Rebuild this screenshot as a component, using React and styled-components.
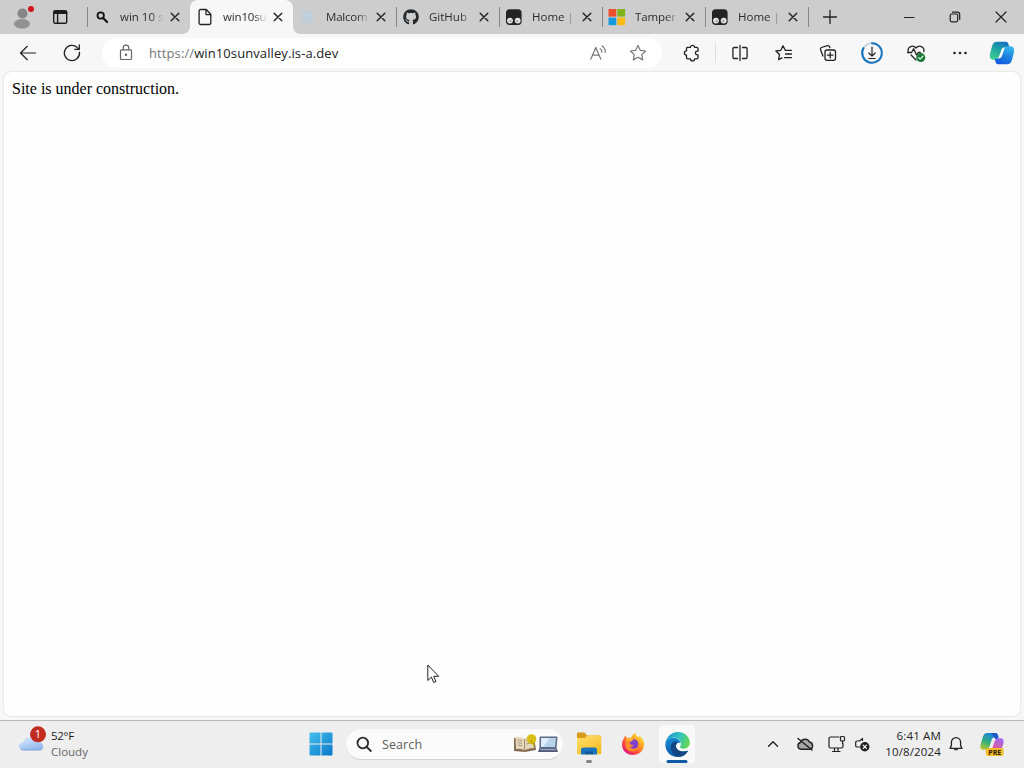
import React from 'react';
import styled, { createGlobalStyle, css } from 'styled-components';
import { FaGithub } from 'react-icons/fa';

const GlobalStyle = createGlobalStyle`
  * {
    box-sizing: border-box;
  }
  body {
    margin: 0;
    overflow: hidden;
    font-family: 'Open Sans', 'Noto Sans', sans-serif;
    color: #1b1b1b;
  }
  svg {
    display: block;
    flex: none;
    overflow: visible;
  }
`;

const Desktop = styled.div`
  position: relative;
  display: flex;
  flex-direction: column;
  width: 1024px;
  height: 768px;
  background: #f7f7f7;
`;

const TabStrip = styled.div`
  display: flex;
  height: 34px;
  background: #cdcdcd;
`;

const StripTools = styled.div`
  display: flex;
  align-items: center;
  width: 87px;
  padding-left: 12px;
  gap: 20px;
`;

const activeTab = css`
  background: #f7f7f7;
  border-radius: 8px 8px 0 0;
  &::before,
  &::after {
    content: '';
    position: absolute;
    bottom: 0;
    width: 7px;
    height: 7px;
  }
  &::before {
    left: -7px;
    background: radial-gradient(circle at 0 0, transparent 6.5px, #f7f7f7 7px);
  }
  &::after {
    right: -7px;
    background: radial-gradient(circle at 100% 0, transparent 6.5px, #f7f7f7 7px);
  }
`;

const TabBox = styled.div`
  position: relative;
  display: flex;
  align-items: center;
  width: 103px;
  padding-left: 7px;
  ${props => props.$active && activeTab}
`;

const TabLine = styled.span`
  width: 1px;
  height: 20px;
  margin-right: -1px;
  align-self: center;
  background: ${props => (props.$hidden ? 'transparent' : '#858585')};
`;

const TabLabel = styled.span`
  width: 43px;
  margin: 0 5px 0 10px;
  overflow: hidden;
  white-space: nowrap;
  font-size: 11.5px;
  line-height: 18px;
  letter-spacing: ${props => props.$spacing || 0}px;
  color: #2c2c2c;
  mask-image: linear-gradient(to right, #000 72%, rgba(0, 0, 0, 0.12) 98%);
`;

const StripButton = styled.div`
  display: flex;
  align-items: center;
  justify-content: center;
  width: ${props => props.$width || 46}px;
`;

const WindowButtons = styled.div`
  display: flex;
  margin-left: auto;
`;

const Toolbar = styled.div`
  display: flex;
  align-items: center;
  height: 38px;
  padding: 0 0 0 6px;
  background: #f7f7f7;
`;

const ToolButton = styled.div`
  display: flex;
  align-items: center;
  justify-content: center;
  width: ${props => props.$width || 44}px;
  height: 32px;
`;

const AddressBar = styled.div`
  display: flex;
  align-items: center;
  width: 560px;
  height: 30px;
  margin: 0 8px;
  padding: 0 4px 0 16px;
  border-radius: 15px;
  background: #fff;
`;

const Url = styled.span`
  flex: 1;
  margin-left: 15px;
  font-size: 13px;
  line-height: 20px;
  letter-spacing: 0.1px;
  white-space: nowrap;
  color: #222;
`;

const Protocol = styled.span`
  color: #777;
`;

const ToolDivider = styled.span`
  width: 1px;
  height: 20px;
  margin: 0 2px 0 1px;
  background: #dcdcdc;
`;

const Page = styled.main`
  flex: 1;
  margin: 0 4px 4px;
  padding: 8px;
  border-radius: 7px;
  background: #fefefe;
  box-shadow: 0 0 2px #c4c4c4;
  font-family: 'Liberation Serif', serif;
  font-size: 16px;
  line-height: 18px;
  color: #000;
`;

const PageText = styled.p`
  margin: 0;
`;

const Taskbar = styled.footer`
  display: flex;
  align-items: center;
  height: 48px;
  padding-bottom: 1px;
  border-top: 1px solid #b9b9b9;
  background: #eee;
`;

const Weather = styled.div`
  display: flex;
  align-items: center;
  width: 299px;
  padding-left: 18px;
  gap: 4px;
`;

const WeatherText = styled.div`
  font-size: 11.5px;
  line-height: 16px;
  letter-spacing: -0.3px;
  color: #1b1b1b;
`;

const Muted = styled.div`
  color: #666;
  letter-spacing: 0;
`;

const SearchBox = styled.div`
  display: flex;
  align-items: center;
  width: 217px;
  height: 31px;
  margin: 1px 4px 0;
  padding: 0 4px 0 10px;
  border-radius: 16px;
  background: #fbfbfb;
  border-bottom: 1px solid #d2d2d2;
`;

const SearchLabel = styled.span`
  flex: 1;
  margin-left: 10px;
  font-size: 12.5px;
  letter-spacing: 0.1px;
  color: #5c5c5c;
`;

const TaskButton = styled.div`
  position: relative;
  display: flex;
  align-items: center;
  justify-content: center;
  width: ${props => (props.$narrow ? 43 : 44)}px;
  height: 40px;
`;

const ActiveApp = styled.div`
  display: flex;
  align-items: center;
  justify-content: center;
  width: 36px;
  height: 38px;
  border-radius: 4px;
  background: #f9f9f9;
`;

const Indicator = styled.span`
  position: absolute;
  bottom: 1px;
  left: 50%;
  width: ${props => (props.$active ? 21 : 6)}px;
  height: 3px;
  border-radius: 2px;
  transform: translateX(-50%);
  background: ${props => (props.$active ? '#0f5aa5' : '#858585')};
`;

const Tray = styled.div`
  display: flex;
  align-items: center;
  margin: 0 9px 0 auto;
`;

const TrayItem = styled.div`
  display: flex;
  align-items: center;
  justify-content: center;
  width: ${props => props.$width}px;
  height: 40px;
`;

const Clock = styled.div`
  width: 68px;
  font-size: 11.5px;
  line-height: 16px;
  text-align: right;
  white-space: nowrap;
  color: #222;
`;

const ClockLine = styled.div`
  letter-spacing: 0.15px;
`;

const Pointer = styled.div`
  position: absolute;
  left: 427px;
  top: 664px;
`;

// Base for all outline icons, one unit is one pixel
function Line({ w = 20, h = w, color = '#222', stroke = 1.2, children }) {
  return (
    <svg
      width={w}
      height={h}
      viewBox={`0 0 ${w} ${h}`}
      fill="none"
      stroke={color}
      strokeWidth={stroke}
      strokeLinecap="round"
      strokeLinejoin="round"
    >
      {children}
    </svg>
  );
}

const CloseIcon = ({ size = 14, inset = 3.2, stroke = 1.4 }) => (
  <Line w={size} stroke={stroke}>
    <path d={`M${inset} ${inset} L${size - inset} ${size - inset} M${size - inset} ${inset} L${inset} ${size - inset}`} />
  </Line>
);

const ProfileIcon = () => (
  <svg width="20" height="24" viewBox="0 0 20 24">
    <circle cx="10.5" cy="8.5" r="5" fill="#858585" />
    <ellipse cx="10" cy="18.8" rx="8" ry="4.8" fill="#929292" />
    <circle cx="19" cy="4" r="3" fill="#d3141c" />
  </svg>
);

const WorkspaceIcon = () => (
  <Line w={16} stroke={1.4} color="#1c1c1c">
    <rect x="1.7" y="1.7" width="13" height="12.6" rx="1.6" />
    <path d="M2.5 3.4h11.4" strokeWidth="3" />
    <path d="M5.6 5v9" />
  </Line>
);

const MagnifierFavicon = () => (
  <Line w={16} stroke={1.8} color="#111">
    <circle cx="6.7" cy="6.5" r="3.2" />
    <path d="M9.3 9.2l3.8 3.8" strokeWidth="2.2" />
  </Line>
);

const DocumentFavicon = () => (
  <Line w={16} stroke={1.3}>
    <path d="M3.6 .5h5.6l4.6 4.8v8.7a1.5 1.5 0 0 1-1.5 1.5H3.6a1.5 1.5 0 0 1-1.5-1.5v-12A1.5 1.5 0 0 1 3.6.5z" />
    <path d="M9 .7v4.9h4.6" />
  </Line>
);

const PaleFavicon = () => (
  <svg width="16" height="16" viewBox="0 0 16 16">
    <rect x="1.5" y="1" width="12" height="14" rx="4" fill="#c4cdd6" />
    <path d="M4.5 5q3-2 6 0v5.5q-3 2-6 0z" fill="#c0d0df" />
  </svg>
);

const TampermonkeyFavicon = () => (
  <svg width="16" height="16" viewBox="0 0 16 16">
    <rect x="0" y="0.3" width="15.6" height="15.6" rx="3.6" fill="#242424" />
    <circle cx="4" cy="11.6" r="2.9" fill="#e4e4e4" />
    <circle cx="11.7" cy="11.6" r="2.9" fill="#e4e4e4" />
    <circle cx="4.6" cy="12" r="1.1" fill="#999" />
    <circle cx="11.2" cy="12" r="1.1" fill="#999" />
  </svg>
);

const MicrosoftFavicon = () => (
  <svg width="16" height="16" viewBox="0 0 16 16">
    <path fill="#ed4e2c" d="M-.5 0h7.8v7.6H-.5z" />
    <path fill="#7eb51d" d="M8.3 0h7.8v7.6H8.3z" />
    <path fill="#1799df" d="M-.5 8.6h7.8v7.6H-.5z" />
    <path fill="#fcb916" d="M8.3 8.6h7.8v7.6H8.3z" />
  </svg>
);

const BackIcon = () => (
  <Line>
    <path d="M17.5 10H2.5M9.3 3.3L2.5 10l6.8 6.7" />
  </Line>
);

const ReloadIcon = () => (
  <Line stroke={1.3}>
    <path d="M17.5 9.2A7.6 7.6 0 1 1 15.3 4.6L17 6.2M17.3 2v4.4h-4.5" />
  </Line>
);

const LockIcon = () => (
  <Line w={16} h={18} color="#666">
    <rect x="2.5" y="5.8" width="11" height="9.7" rx="1" />
    <path d="M5.2 5.6V4a2.8 2.8 0 0 1 5.6 0v1.6" />
    <circle cx="8" cy="10.8" r="0.6" fill="#555" />
  </Line>
);

const ReadAloudIcon = () => (
  <Line w={18} color="#777">
    <path d="M1.8 15.2L6.8 3.4l5 11.8M3.6 11.2h6.5M11.2 4.6q1.8 1.4 1.6 3.6M13.2 2q3.4 2.4 3 6.4" />
  </Line>
);

const StarIcon = () => (
  <Line w={18} color="#777">
    <path d="M9 1.5l2.3 4.8 5.3.7-3.9 3.6 1 5.3L9 13.3l-4.7 2.6 1-5.3L1.4 7l5.3-.7z" />
  </Line>
);

const PuzzleIcon = () => (
  <Line w={18} stroke={1.3}>
    <path d="M4.5 3.3H7.5a2 2 0 0 1 4 0h2.2a1.3 1.3 0 0 1 1.3 1.3v2.6h-.8a1.8 1.8 0 0 0 0 3.6h.8v2.8a1.3 1.3 0 0 1-1.3 1.3h-2.2a2 2 0 0 1-4 0H4.8a1.3 1.3 0 0 1-1.3-1.3v-2.5a2.1 2.1 0 0 1 0-4.2V4.5a1.2 1.2 0 0 1 1-1.2z" />
  </Line>
);

const SplitIcon = () => (
  <Line w={18} stroke={1.3}>
    <path d="M6.5 3.5H3.1A1.2 1.2 0 0 0 1.9 4.7v8.6a1.2 1.2 0 0 0 1.2 1.2H6.5M11.5 3.5h3.4a1.2 1.2 0 0 1 1.2 1.2v8.6a1.2 1.2 0 0 1-1.2 1.2H11.5M9 1.5v15" />
  </Line>
);

const FavoritesIcon = () => (
  <Line w={18} stroke={1.3}>
    <path d="M10.3 6.3L8 1.8 5.8 6.3l-4.9.7 3.6 3.5-.9 5.1 3.4-1.7M10.3 6.3h6.2M10.5 10h6M9.5 13.6h7" />
  </Line>
);

const CollectionsIcon = () => (
  <Line w={18} stroke={1.3}>
    <rect x="6" y="6" width="10.5" height="10.3" rx="2" />
    <path d="M11.2 8.3v5.6M8.4 11.1H14M3.9 12L1.5 5.5a1.6 1.6 0 0 1 1-2l6-1.8a1.6 1.6 0 0 1 2 1l.4 1" />
  </Line>
);

const DownloadIcon = () => (
  <Line w={22} stroke={1.2}>
    <circle cx="11" cy="11" r="9.8" stroke="#c7d5df" strokeWidth="1.8" />
    <path d="M11 1.2A9.8 9.8 0 1 1 2.5 6.1" stroke="#1675bd" strokeWidth="2" />
    <path d="M11 5v9M7.8 11L11 14.2l3.2-3.2M7.8 16.5h6.4" />
  </Line>
);

const HealthIcon = () => (
  <Line w={20} stroke={1.3}>
    <path d="M2.2 8.5C1.2 3.5 7 1.5 10 5c3-3.5 8.8-1.5 7.8 3.5M5 12l5 5M1.6 9.5h4l2-3.7 3 6.2 1.7-2.5h2" />
    <circle cx="14.8" cy="14.6" r="4.5" fill="#177b36" stroke="none" />
    <path d="M12.8 14.7l1.4 1.4 2.7-2.8" stroke="#d9efdf" />
  </Line>
);

const MoreIcon = () => (
  <svg width="18" height="18" viewBox="0 0 18 18" fill="#222">
    <circle cx="3.5" cy="9" r="1.3" />
    <circle cx="9" cy="9" r="1.3" />
    <circle cx="14.5" cy="9" r="1.3" />
  </svg>
);

const CopilotIcon = () => (
  <svg width="24" height="24" viewBox="0 0 24 24">
    <defs>
      <linearGradient id="copLeft" x1="0.7" y1="0" x2="0.2" y2="1">
        <stop offset="0" stopColor="#1670c4" />
        <stop offset="0.4" stopColor="#1d9fa5" />
        <stop offset="1" stopColor="#3fcf8c" />
      </linearGradient>
      <linearGradient id="copRight" x1="0.7" y1="0" x2="0.3" y2="1">
        <stop offset="0" stopColor="#38b8ee" />
        <stop offset="0.5" stopColor="#1c84e0" />
        <stop offset="1" stopColor="#1658dc" />
      </linearGradient>
    </defs>
    <path fill="url(#copLeft)" d="M7 .8h8.500c2.300 0 3 1.700 3.800 5.200l-3 .5c-2.600 0-3.800 1-4.500 3.300L10 15.500c-.8 2.300-2 3.300-4 3.300H3.500C.5 18.800-.8 16 .1 12.500l2-7.500C3 2 4.500.8 7 .8z" />
    <path fill="url(#copRight)" d="M17 23.200H8.500c-2.300 0-3-1.700-3.800-5.200l3-.5c2.600 0 3.800-1 4.500-3.300L14 8.500c.8-2.300 2-3.300 4-3.300h2.500c3 0 4.300 2.800 3.400 6.300l-2 7.500c-.9 3-2.400 4.200-4.900 4.200z" />
    <path fill="#f4f9fc" d="M11.500 8.500q1-2.300 3.800-2.300-1 .8-1.500 2.300l-2.200 6.500q-.7 2-2.500 2.300H7.500q1.300-1 1.900-2.700z" />
  </svg>
);

const WeatherIcon = () => (
  <svg width="29" height="28" viewBox="0 0 29 28">
    <defs>
      <linearGradient id="cloud" x1="0" y1="0" x2="0.6" y2="1">
        <stop offset="0" stopColor="#dceafb" />
        <stop offset="1" stopColor="#92b8ee" />
      </linearGradient>
    </defs>
    <g transform="translate(0 -3)">
      <path fill="url(#cloud)" d="M5.5 23C-.5 23-.3 15.500 5 15.500c1-4.500 7-7 10.500-3 2-.5 3.800.5 4.200 2.500 6.500-.5 7.800 8 1.300 8z" />
      <path d="M2.5 21.800q1.300 1.200 3 1.200H21q2 0 3.300-1.300" fill="none" stroke="#7b9fdc" />
      <circle cx="20" cy="7.300" r="8" fill="#c42b20" />
      <text x="20" y="11.300" textAnchor="middle" fontSize="11" fill="#fff">1</text>
    </g>
  </svg>
);

const StartIcon = () => (
  <svg width="24" height="24" viewBox="0 0 24 24">
    <defs>
      <linearGradient id="start" gradientUnits="userSpaceOnUse" x1="0" y1="0" x2="24" y2="24">
        <stop offset="0" stopColor="#45c3ee" />
        <stop offset="1" stopColor="#0874c7" />
      </linearGradient>
    </defs>
    <path fill="url(#start)" d="M1.5.5H11.5V11.5H.5V1.5a1 1 0 0 1 1-1zM12.5.5h10a1 1 0 0 1 1 1v10h-11zM.5 12.5h11v11h-10a1 1 0 0 1-1-1zM12.5 12.5h11v10a1 1 0 0 1-1 1h-10z" />
  </svg>
);

const SearchIcon = () => (
  <Line w={16} stroke={1.8} color="#2d2d2d">
    <circle cx="6.8" cy="7" r="5.3" />
    <path d="M10.8 11l4 4" />
  </Line>
);

const SearchArt = () => (
  <svg width="46" height="20" viewBox="0 0 46 20">
    <path fill="#856d54" d="M1 4l10 1 10-2 2 13-11 2-11-1z" />
    <path fill="#e5d8bc" d="M2.5 3q5-1 8.5 1.5v11.5q-4-2-8-1zM12 4.5q4-2.5 8-1.5l1 11q-5 0-9 2z" />
    <path d="M4.5 6l4.5.8M4.5 8.5l4.5.8M4.7 11l4.3.8M13.5 7l4-1M13.5 10l4-1" stroke="#ab9a7f" />
    <path d="M11.5 5v12" stroke="#a18d70" />
    <circle cx="18.5" cy="5" r="4.8" fill="#d9bf16" />
    <path d="M17.5 6.500l4 5" stroke="#c4a608" strokeWidth="2" />
    <path fill="#5b6b83" d="M26.5 3.5a1 1 0 0 1 1-1h16a1 1 0 0 1 1 1L43.5 14H26.5z" />
    <path fill="#b9d2ed" d="M28 4h15l-1 9H28z" />
    <path fill="#dfecf9" d="M28 4h9l-7 9h-2z" />
    <path fill="#4f5b78" d="M26.5 14h17l1.5 4H25z" />
    <path fill="#98a2b8" d="M27.5 14.8h15l.5 1.5H27z" />
  </svg>
);

const ExplorerIcon = () => (
  <svg width="26" height="24" viewBox="0 0 26 24">
    <defs>
      <linearGradient id="folder" x1="0" y1="0" x2="0.6" y2="1">
        <stop offset="0" stopColor="#ffdf70" />
        <stop offset="1" stopColor="#f5bd25" />
      </linearGradient>
    </defs>
    <path fill="#d99a17" d="M2 .5h6.5l2.5 3H24V8H1V1.5a1 1 0 0 1 1-1z" />
    <path fill="url(#folder)" d="M1 6h8l2.5-2.5H24a1.300 1.300 0 0 1 1.300 1.300V21a1.300 1.300 0 0 1-1.300 1.300H2.300A1.300 1.300 0 0 1 1 21z" />
    <path fill="#1875bd" d="M5 22.5V18a2.500 2.500 0 0 1 2.500-2.500h11A2.500 2.500 0 0 1 21 18v4.500h-4V20H9v2.500z" />
    <path fill="#0f5997" d="M9 19.5h8v3H9z" />
  </svg>
);

const FirefoxIcon = () => (
  <svg width="24" height="24" viewBox="0 0 24 24">
    <defs>
      <linearGradient id="fox" x1="0.9" y1="0.1" x2="0.2" y2="0.9">
        <stop offset="0" stopColor="#ffe63a" />
        <stop offset="0.4" stopColor="#ff9a25" />
        <stop offset="0.7" stopColor="#ff513d" />
        <stop offset="1" stopColor="#e61c72" />
      </linearGradient>
    </defs>
    <path fill="url(#fox)" d="M4 3.5L6.2 6q2.3-.5 4-.2.5-2.500 3.800-5 1.200 3.200 4 5 .2-1.200-.3-2.300C21.500 5.500 23.500 9.500 23 13.500 22.200 19.500 17.500 23 12 23 5.500 23 1 18.500 1 12.500 1 9.500 2 7.500 3 6.500z" />
    <circle cx="12.5" cy="12" r="4.8" fill="#8040ce" />
    <path fill="#ff8a28" d="M4.5 8.500q4-2.500 7 .5-2 .2-3 2 1 2.500 4 2-1 2.300-3.500 2 3 3.500 8 .5-1 4-5 4-6 0-7.500-5z" />
    <path fill="#ffb52f" d="M6 6q3-1 5 .7l1.5 1.300-3 1.200q-2.500-1.500-5-.2z" />
  </svg>
);

const EdgeIcon = () => (
  <svg width="25" height="25" viewBox="0 0 24 24">
    <defs>
      <linearGradient id="edgeTop" x1="0" y1="0.3" x2="1" y2="0.6">
        <stop offset="0" stopColor="#198fcb" />
        <stop offset="0.5" stopColor="#2ec1c4" />
        <stop offset="1" stopColor="#67d852" />
      </linearGradient>
      <linearGradient id="edgeBody" x1="0" y1="0" x2="0.3" y2="1">
        <stop offset="0" stopColor="#188ed8" />
        <stop offset="1" stopColor="#0b56a3" />
      </linearGradient>
    </defs>
    <path fill="url(#edgeBody)" d="M.3 12C.3 7.5 4 5.3 8 5.5c4 .2 6.8 2.500 7 5-3-.8-4.500 1-4.500 3 0 4.500 6 6.500 11.800 4.500C20 22 16.500 24 12.300 24 5.500 24 .3 18.800.3 12z" />
    <path fill="#124784" d="M8.5 9c-3 2-4 6.500-1.500 10.500C8.500 22 11 23.500 13 24c4-.2 7.300-2.500 9.200-6-6 2-11.700 0-11.700-4.500 0-1.500.7-2.500 1.500-3.200-.8-1-2-1.500-3.500-1.300z" />
    <path fill="url(#edgeTop)" d="M.4 11.500C1 5 6 0 12.300 0 19 0 23.800 4.700 23.800 10c0 4-2.800 6-6 6-2 0-3.800-.6-3.500-1.500.2-.6 1-1.200 1-3C15.300 8 12 5.300 8 5.300 4 5.300.8 8 .4 11.500z" />
  </svg>
);

const TrayCopilot = () => (
  <svg width="24" height="24" viewBox="0 0 24 24">
    <defs>
      <linearGradient id="trayLeft" x1="0.5" y1="0" x2="0" y2="1">
        <stop offset="0" stopColor="#1783d8" />
        <stop offset="0.5" stopColor="#35b078" />
        <stop offset="1" stopColor="#cfcc24" />
      </linearGradient>
      <linearGradient id="trayRight" x1="0.6" y1="0" x2="0" y2="1">
        <stop offset="0" stopColor="#a669e8" />
        <stop offset="0.5" stopColor="#e25b9f" />
        <stop offset="1" stopColor="#f58a35" />
      </linearGradient>
    </defs>
    <path fill="url(#trayLeft)" d="M7.5 1H15c2.3 0 3 1.5 3.6 4h-3c-2.500 0-3.500 1.200-4.300 4l-2 6c-.8 2.300-1.800 2.800-4 2.800H3.500C.6 17.800-.2 15.500.6 12.500L3 4.500C3.800 2 5.200 1 7.500 1z" />
    <path fill="#2057c8" d="M11 1h4c2.3 0 3 1.5 3.6 6h-3.300z" />
    <path fill="url(#trayRight)" d="M16.5 22H9c-2.300 0-3-1-3.600-3h3c2.500 0 3.500-1.200 4.300-4l2-6c.8-2.300 1.800-2.800 4-2.800h1.800c2.900 0 3.700 2.300 2.900 5.300L21 19.500c-.8 2-2.200 2.500-4.500 2.500z" />
    <rect x="6" y="16" width="17.5" height="8" rx="2" fill="#f6bc25" />
    <text x="14.8" y="22.5" textAnchor="middle" fontSize="7" fontWeight="700" fill="#2b2000">PRE</text>
  </svg>
);

const tabs = [
  { icon: <MagnifierFavicon />, label: 'win 10 s' },
  { icon: <DocumentFavicon />, label: 'win10su', active: true, spacing: -0.15 },
  { icon: <PaleFavicon />, label: 'Malcom', spacing: -0.2 },
  { icon: <FaGithub size={16} color="#24292e" />, label: 'GitHub' },
  { icon: <TampermonkeyFavicon />, label: 'Home |' },
  { icon: <MicrosoftFavicon />, label: 'Tamper', spacing: -0.1 },
  { icon: <TampermonkeyFavicon />, label: 'Home |' }
];

function Tabs() {
  return (
    <TabStrip>
      <StripTools>
        <ProfileIcon />
        <WorkspaceIcon />
      </StripTools>
      {tabs.map((tab, i) => (
        <React.Fragment key={i}>
          <TabLine $hidden={i === 1 || i === 2} />
          <TabBox $active={tab.active}>
            {tab.icon}
            <TabLabel $spacing={tab.spacing}>{tab.label}</TabLabel>
            <CloseIcon />
          </TabBox>
        </React.Fragment>
      ))}
      <TabLine />
      <StripButton $width={43}>
        <Line w={14} stroke={1.3}>
          <path d="M7 .5v13M.5 7h13" />
        </Line>
      </StripButton>
      <WindowButtons>
        <StripButton>
          <Line w={12}>
            <path d="M1.5 6.5h9.5" />
          </Line>
        </StripButton>
        <StripButton>
          <Line w={12}>
            <rect x="1.2" y="3" width="7.5" height="7.8" rx="1.5" />
            <path d="M3.5 1.2h5a2.2 2.2 0 0 1 2.2 2.2v5" />
          </Line>
        </StripButton>
        <StripButton>
          <CloseIcon size={12} inset={1} stroke={1.2} />
        </StripButton>
      </WindowButtons>
    </TabStrip>
  );
}

function BrowserToolbar() {
  return (
    <Toolbar>
      <ToolButton><BackIcon /></ToolButton>
      <ToolButton><ReloadIcon /></ToolButton>
      <AddressBar>
        <LockIcon />
        <Url>
          <Protocol>https://</Protocol>
          win10sunvalley.is-a.dev
        </Url>
        <ToolButton $width={40}><ReadAloudIcon /></ToolButton>
        <ToolButton $width={40}><StarIcon /></ToolButton>
      </AddressBar>
      <ToolButton><PuzzleIcon /></ToolButton>
      <ToolDivider />
      <ToolButton><SplitIcon /></ToolButton>
      <ToolButton><FavoritesIcon /></ToolButton>
      <ToolButton><CollectionsIcon /></ToolButton>
      <ToolButton><DownloadIcon /></ToolButton>
      <ToolButton><HealthIcon /></ToolButton>
      <ToolButton><MoreIcon /></ToolButton>
      <ToolButton $width={40}><CopilotIcon /></ToolButton>
    </Toolbar>
  );
}

function SystemTray() {
  return (
    <Tray>
      <TrayItem $width={32}>
        <Line w={12} stroke={1.4}>
          <path d="M1.5 8.2L6 3.7l4.5 4.5" />
        </Line>
      </TrayItem>
      <TrayItem $width={32}>
        <Line w={18} stroke={1.4}>
          <path fill="#a8a8a8" d="M4.8 14.3a3.5 3.5 0 0 1-.4-6.8A5 5 0 0 1 13.5 7a3.7 3.7 0 0 1 0 7.3z" />
          <path d="M2 3.5l14 11.5" />
        </Line>
      </TrayItem>
      <TrayItem $width={32}>
        <Line w={18} stroke={1.2}>
          <path d="M11 2H2.5A1.5 1.5 0 0 0 1 3.5v8A1.5 1.5 0 0 0 2.5 13h11a1.500 1.500 0 0 0 1.500-1.500V8.500M6.500 13v3.500M10 13v3.500M4.500 16.500H12" />
          <rect x="12.5" y="1.5" width="4" height="4.5" rx="1" />
          <path d="M14.5 6v2.5" />
        </Line>
      </TrayItem>
      <TrayItem $width={18}>
        <Line w={16} stroke={1.2}>
          <path d="M5.5 11H3A1.3 1.3 0 0 1 1.7 9.7V6.3A1.3 1.3 0 0 1 3 5H5.5L8.5 2.5V4.5" />
          <circle cx="10.8" cy="10.8" r="4.7" fill="#222" stroke="none" />
          <path d="M9.2 9.2l3.2 3.2M12.4 9.2l-3.2 3.2" stroke="#fff" />
        </Line>
      </TrayItem>
      <TrayItem $width={72}>
        <Clock>
          <ClockLine>6:41 AM</ClockLine>
          <ClockLine>10/8/2024</ClockLine>
        </Clock>
      </TrayItem>
      <TrayItem $width={26}>
        <Line w={16} stroke={1.3}>
          <path d="M8 1.7a4.6 4.6 0 0 0-4.6 4.6v3.2L2 12.4h12l-1.4-2.9V6.3A4.6 4.6 0 0 0 8 1.7zM6.2 12.6a1.9 1.9 0 0 0 3.6 0" />
        </Line>
      </TrayItem>
      <TrayItem $width={46}><TrayCopilot /></TrayItem>
    </Tray>
  );
}

export default function App() {
  return (
    <Desktop>
      <GlobalStyle />
      <Tabs />
      <BrowserToolbar />
      <Page>
        <PageText>Site is under construction.</PageText>
      </Page>
      <Taskbar>
        <Weather>
          <WeatherIcon />
          <WeatherText>
            52°F
            <Muted>Cloudy</Muted>
          </WeatherText>
        </Weather>
        <TaskButton $narrow><StartIcon /></TaskButton>
        <SearchBox>
          <SearchIcon />
          <SearchLabel>Search</SearchLabel>
          <SearchArt />
        </SearchBox>
        <TaskButton>
          <ExplorerIcon />
          <Indicator />
        </TaskButton>
        <TaskButton><FirefoxIcon /></TaskButton>
        <TaskButton>
          <ActiveApp><EdgeIcon /></ActiveApp>
          <Indicator $active />
        </TaskButton>
        <SystemTray />
      </Taskbar>
      <Pointer>
        <svg width="13" height="20" viewBox="0 0 13 20">
          <path d="M.8 1v15.500l3.600-3.400 2.300 5.400 2.300-1-2.300-5.200h5z" fill="#fff" stroke="#222" />
        </svg>
      </Pointer>
    </Desktop>
  );
}
